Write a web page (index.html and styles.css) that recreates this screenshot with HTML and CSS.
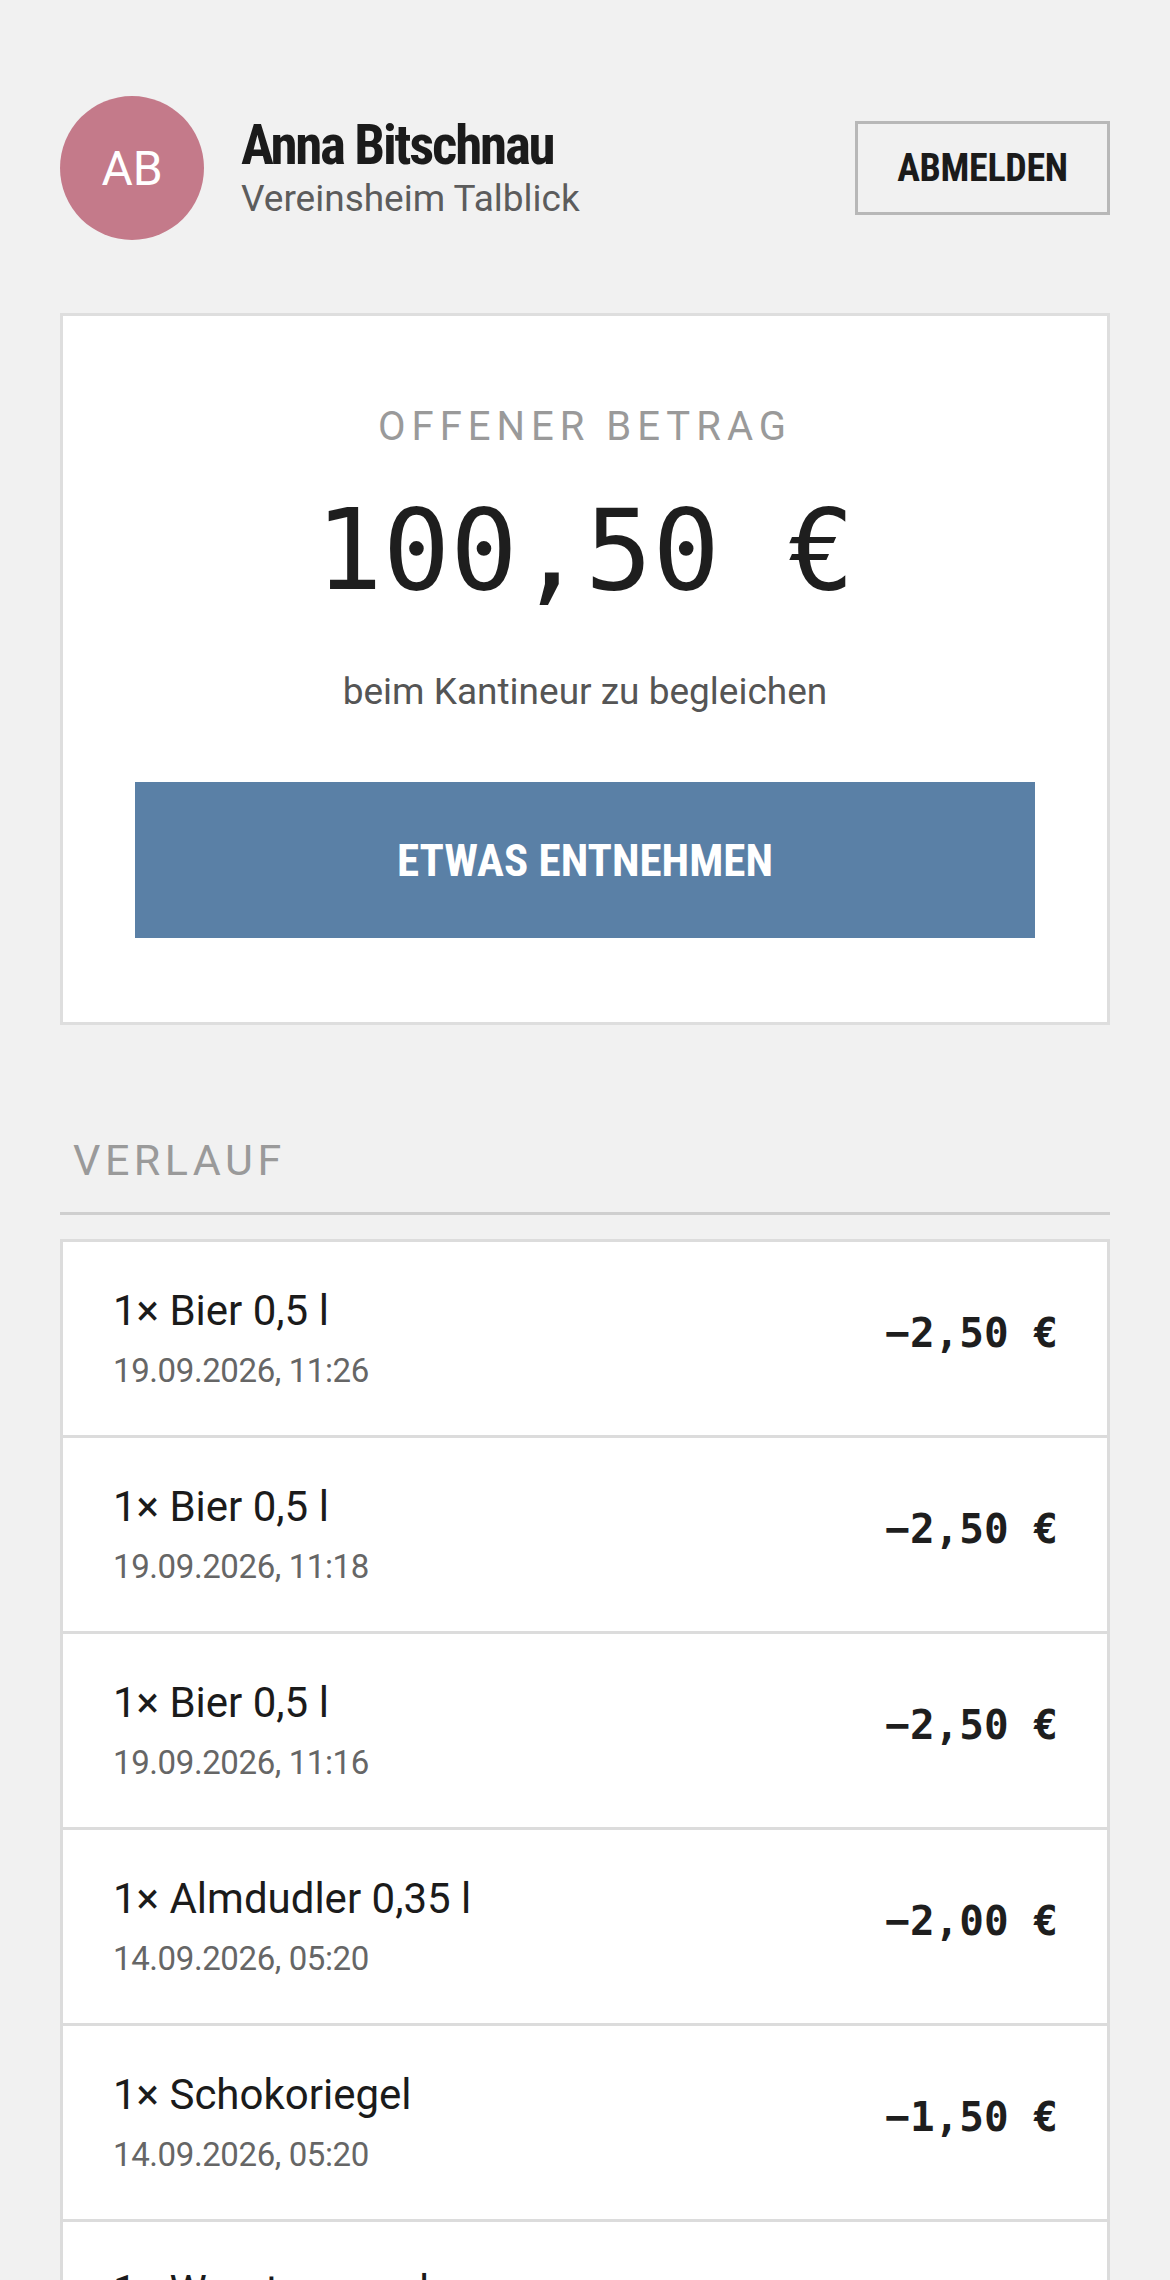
FILE: index.html
```html
<!DOCTYPE html>
<html lang="de">
<head>
<meta charset="utf-8">
<title>Konto – Anna Bitschnau</title>
<link rel="stylesheet" href="styles.css">
</head>
<body>
<div class="page">
  <header class="header">
    <div class="avatar">AB</div>
    <div class="who">
      <div class="name">Anna Bitschnau</div>
      <div class="club">Vereinsheim Talblick</div>
    </div>
    <button class="logout">ABMELDEN</button>
  </header>

  <section class="balance">
    <div class="balance-label">OFFENER BETRAG</div>
    <div class="balance-amount">100,50 €</div>
    <div class="balance-note">beim Kantineur zu begleichen</div>
    <button class="primary">ETWAS ENTNEHMEN</button>
  </section>

  <h2 class="section-title">VERLAUF</h2>

  <ul class="history">
    <li class="entry">
      <div class="entry-text">
        <div class="entry-title">1× Bier 0,5 l</div>
        <div class="entry-date">19.09.2026, 11:26</div>
      </div>
      <div class="entry-amount">−2,50 €</div>
    </li>
    <li class="entry">
      <div class="entry-text">
        <div class="entry-title">1× Bier 0,5 l</div>
        <div class="entry-date">19.09.2026, 11:18</div>
      </div>
      <div class="entry-amount">−2,50 €</div>
    </li>
    <li class="entry">
      <div class="entry-text">
        <div class="entry-title">1× Bier 0,5 l</div>
        <div class="entry-date">19.09.2026, 11:16</div>
      </div>
      <div class="entry-amount">−2,50 €</div>
    </li>
    <li class="entry">
      <div class="entry-text">
        <div class="entry-title">1× Almdudler 0,35 l</div>
        <div class="entry-date">14.09.2026, 05:20</div>
      </div>
      <div class="entry-amount">−2,00 €</div>
    </li>
    <li class="entry">
      <div class="entry-text">
        <div class="entry-title">1× Schokoriegel</div>
        <div class="entry-date">14.09.2026, 05:20</div>
      </div>
      <div class="entry-amount">−1,50 €</div>
    </li>
    <li class="entry">
      <div class="entry-text">
        <div class="entry-title">1× Wurstsemmel</div>
        <div class="entry-date">14.09.2026, 05:18</div>
      </div>
      <div class="entry-amount">−3,00 €</div>
    </li>
  </ul>
</div>
</body>
</html>
```

FILE: styles.css
```css
html {
  background: #f1f1f1;
}

body {
  margin: 0;
  font-family: Roboto, "Noto Sans", sans-serif;
  color: #1d1d1d;
}

.page {
  padding: 96px 60px 0;
  height: 2280px;
  box-sizing: border-box;
  overflow: hidden;
}

/* header */
.header {
  display: flex;
  align-items: center;
}

.avatar {
  width: 144px;
  height: 144px;
  border-radius: 50%;
  background: #c47a8a;
  color: #fff;
  display: flex;
  align-items: center;
  justify-content: center;
  font-size: 48px;
  flex: none;
}

.who {
  margin-left: 37px;
  display: flex;
  flex-direction: column;
}

.name {
  font-family: Roboto, sans-serif;
  font-stretch: 75%;
  font-weight: 700;
  font-size: 55px;
  line-height: 62px;
  letter-spacing: -2.2px;
  color: #1b1b1b;
}

.club {
  font-size: 37px;
  line-height: 46px;
  color: #5c5c5c;
}

.logout {
  margin-left: auto;
  width: 255px;
  height: 94px;
  border: 3px solid #b8b8b8;
  background: transparent;
  font-family: Roboto, sans-serif;
  font-stretch: 75%;
  font-weight: 700;
  font-size: 38px;
  letter-spacing: -0.3px;
  color: #1b1b1b;
  padding: 0;
}

/* balance card */
.balance {
  margin-top: 73px;
  background: #fff;
  border: 3px solid #dedede;
  padding: 87px 72px 84px;
  text-align: center;
}

.balance-label {
  font-size: 40px;
  line-height: 48px;
  letter-spacing: 6px;
  color: #9a9a9a;
}

.balance-amount {
  margin-top: 38px;
  font-family: "DejaVu Sans Mono", "Liberation Mono", monospace;
  font-size: 112px;
  line-height: 122px;
  color: #1e1e1e;
}

.balance-note {
  margin-top: 59px;
  font-size: 37px;
  line-height: 44px;
  color: #555;
}

.primary {
  margin-top: 68px;
  width: 100%;
  height: 156px;
  border: 0;
  background: #5a80a6;
  color: #fff;
  font-family: Roboto, sans-serif;
  font-stretch: 75%;
  font-weight: 700;
  font-size: 45px;
  letter-spacing: 0;
  padding: 0;
}

/* history */
.section-title {
  margin: 109px 0 0;
  padding: 0 0 26px 13px;
  border-bottom: 3px solid #cfcfcf;
  font-weight: 400;
  font-size: 43px;
  line-height: 52px;
  letter-spacing: 4.5px;
  color: #9a9a9a;
}

.history {
  list-style: none;
  margin: 24px 0 0;
  padding: 0;
  background: #fff;
  border: 3px solid #dcdcdc;
}

.entry {
  display: flex;
  align-items: center;
  justify-content: space-between;
  padding: 44px 49px 44px 50px;
}

.entry + .entry {
  border-top: 3px solid #dcdcdc;
}

.entry-title {
  font-size: 42px;
  line-height: 50px;
  color: #1b1b1b;
}

.entry-date {
  margin-top: 15px;
  font-size: 33px;
  line-height: 40px;
  letter-spacing: -0.4px;
  color: #666;
}

.entry-amount {
  font-family: "DejaVu Sans Mono", "Liberation Mono", monospace;
  font-weight: 700;
  font-size: 41px;
  color: #1e1e1e;
  padding-bottom: 12px;
}
```
